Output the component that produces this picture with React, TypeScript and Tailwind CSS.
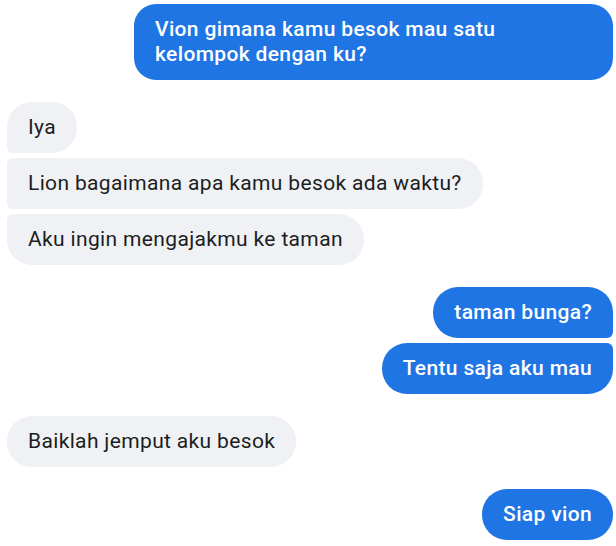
import React from "react";

type Msg = { text: React.ReactNode; mine: boolean; shape: string; key: string };

const groups: Msg[][] = [
  [
    {
      key: "a",
      mine: true,
      shape: "rounded-[22px] w-[479px]",
      text: (
        <>
          Vion gimana kamu besok mau satu
          <br />
          kelompok dengan ku?
        </>
      ),
    },
  ],
  [
    { key: "b", mine: false, shape: "rounded-[25px] rounded-bl-[6px]", text: "Iya" },
    { key: "c", mine: false, shape: "rounded-r-[25px] rounded-l-[6px]", text: "Lion bagaimana apa kamu besok ada waktu?" },
    { key: "d", mine: false, shape: "rounded-[25px] rounded-tl-[6px]", text: "Aku ingin mengajakmu ke taman" },
  ],
  [
    { key: "e", mine: true, shape: "rounded-[25px] rounded-br-[6px]", text: "taman bunga?" },
    { key: "f", mine: true, shape: "rounded-[25px] rounded-tr-[6px]", text: "Tentu saja aku mau" },
  ],
  [{ key: "g", mine: false, shape: "rounded-[25px]", text: "Baiklah jemput aku besok" }],
  [{ key: "h", mine: true, shape: "rounded-[25px]", text: "Siap vion" }],
];

const Bubble = ({ msg }: { msg: Msg }) => (
  <div className={msg.mine ? "flex justify-end" : "flex justify-start"}>
    <div
      className={
        (msg.mine
          ? "bg-[#1e75e3] text-white font-medium"
          : "bg-[#f0f1f5] text-[#1c1e21]") +
        " px-[21px] py-[13px] text-[21px] leading-[25px] tracking-[0.35px] " +
        msg.shape
      }
    >
      {msg.text}
    </div>
  </div>
);

export default function App() {
  return (
    <div
      className="w-[616px] h-[546px] bg-white pl-[7px] pr-[3px] pt-[4px] flex flex-col gap-[22px] overflow-hidden"
      style={{ fontFamily: "Roboto, 'Noto Sans', sans-serif" }}
    >
      {groups.map((g, i) => (
        <div key={i} className="flex flex-col gap-[5px]">
          {g.map((m) => (
            <Bubble key={m.key} msg={m} />
          ))}
        </div>
      ))}
    </div>
  );
}
